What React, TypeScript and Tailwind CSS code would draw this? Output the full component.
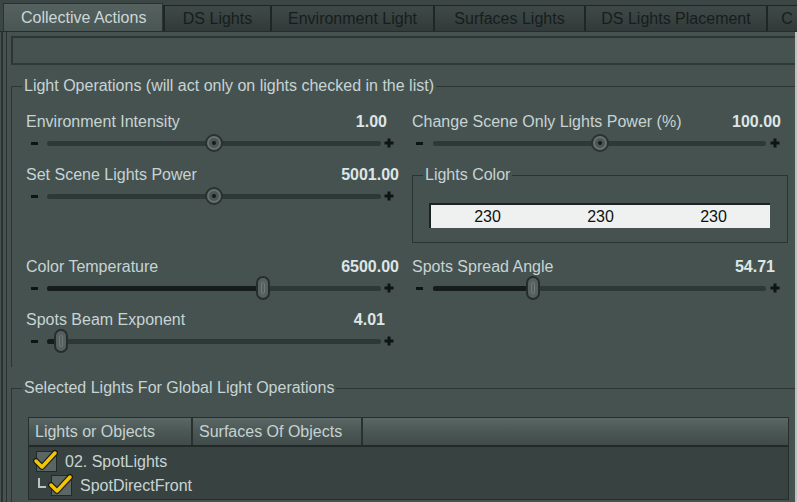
import React from 'react';

type SliderProps = {
  label: string;
  value: string;
  pos: number;
  kind: 'dot' | 'oval';
  valuePad: number;
  right?: boolean;
};

const Minus = () => <span className="block w-[7px] h-[3px] bg-[#0f1413]" />;

const Plus = () => (
  <svg width="10" height="10" viewBox="0 0 10 10" className="block">
    <path d="M5 0.5v9M0.5 5h9" stroke="#0f1413" strokeWidth="3" />
  </svg>
);

const Slider: React.FC<SliderProps> = ({ label, value, pos, kind, valuePad, right }) => {
  const filled = kind === 'oval';
  return (
    <div className="h-[53px]">
      <div className="flex items-center justify-between h-[18px] leading-[18px]" style={{ paddingRight: valuePad }}>
        <span className="text-[#c7d4d4]">{label}</span>
        <span className="font-bold text-[#dde6e6]">{value}</span>
      </div>
      <div className={`mt-[4px] h-[16px] flex items-center ${right ? 'pl-[4px] pr-[8px]' : 'pl-[5px] pr-[5px]'}`}>
        <Minus />
        <div className={`relative flex-1 h-[5px] rounded-full bg-[#2e3836] ${right ? 'ml-[10px] mr-[4px]' : 'ml-[9px] mr-[3px]'}`}>
          {filled && (
            <div className="absolute left-0 top-0 h-full rounded-full bg-[#161c1b]" style={{ width: `${pos * 100}%` }} />
          )}
          {kind === 'dot' ? (
            <div
              className="absolute top-1/2 w-[18px] h-[18px] -ml-[9px] -mt-[9px] rounded-full border-2 border-[#2a3230] bg-[#66706e] flex items-center justify-center"
              style={{ left: `${pos * 100}%` }}
            >
              <div className="w-[10px] h-[10px] rounded-full bg-[#4b5553] flex items-center justify-center">
                <div className="w-[4px] h-[4px] rounded-full bg-[#151b1a]" />
              </div>
            </div>
          ) : (
            <div
              className="absolute top-1/2 w-[14px] h-[24px] -ml-[7px] -mt-[12px] rounded-full border-2 border-[#262e2d] bg-[#56615f] flex items-center justify-center"
              style={{ left: `${pos * 100}%` }}
            >
              <div className="w-[4px] h-[12px] rounded-full border border-[#6f7a78]" />
            </div>
          )}
        </div>
        <Plus />
      </div>
    </div>
  );
};

const Check: React.FC = () => (
  <div className="relative w-[21px] h-[21px] border border-[#222a29] bg-[#5b6563] shrink-0">
    <svg width="26" height="24" viewBox="0 0 26 24" className="absolute -left-[4px] -top-[4px]">
      <path d="M3 13 L9 19 L22 5" fill="none" stroke="#1a1f1e" strokeWidth="6" strokeLinecap="round" strokeLinejoin="round" />
      <path d="M3 13 L9 19 L22 5" fill="none" stroke="#f4c600" strokeWidth="3.5" strokeLinecap="round" strokeLinejoin="round" />
    </svg>
  </div>
);

const tabs = [
  { name: 'DS Lights', w: 'w-[107px]' },
  { name: 'Environment Light', w: 'w-[163px]' },
  { name: 'Surfaces Lights', w: 'w-[151px]' },
  { name: 'DS Lights Placement', w: 'w-[182px]' },
  { name: 'C', w: 'w-[40px]' },
];

export default function App() {
  return (
    <div className="w-[797px] h-[502px] overflow-hidden bg-[#465250] text-[16px] font-['Liberation_Sans',Arial,sans-serif] relative">
      {/* tab strip */}
      <div className="h-[32px] bg-[#3c4745] flex items-end pl-[3px] border-b border-[#262e2d] whitespace-nowrap overflow-hidden">
        <div className="w-[160px] shrink-0 h-[28px] bg-gradient-to-b from-[#55615f] to-[#4a5654] border border-b-0 border-[#2a3332] flex items-center pl-[17px] text-[#cbd7d7]">
          Collective Actions
        </div>
        {tabs.map((t) => (
          <div
            key={t.name}
            className={`${t.w} shrink-0 h-[26px] bg-gradient-to-b from-[#3f4a48] to-[#313a38] border-l-2 border-t border-[#1f2726] flex items-center justify-center text-[#171d1c] overflow-hidden`}
          >
            {t.name}
          </div>
        ))}
      </div>

      <div className="flex h-[470px]">
        <div className="ml-[1px] w-[2px] bg-[#2a3331]" />
        <div className="ml-[3px] w-[1px] bg-[#2a3331]" />
        <div className="flex-1 pl-[4px]">
          {/* recessed bar */}
          <div className="mt-[4px] h-[29px] border-2 border-r-0 border-[#2c3634] border-b-[#2f3937]" />

          {/* group 1 */}
          <div className="relative mt-[21px] border-t border-l border-[#2c3533] h-[281px] pl-[14px] pt-[26px]">
            <span className="absolute -top-[10px] left-[10px] px-[2px] bg-[#465250] text-[#c7d4d4] leading-[18px]">
              Light Operations (will act only on lights checked in the list)
            </span>
            <div className="grid grid-cols-[373px_376px] gap-x-[13px]">
              <div>
                <Slider label="Environment Intensity" value="1.00" pos={0.5} kind="dot" valuePad={12} />
                <div className="h-[92px]">
                  <Slider label="Set Scene Lights Power" value="5001.00" pos={0.5} kind="dot" valuePad={0} />
                </div>
                <Slider label="Color Temperature" value="6500.00" pos={0.648} kind="oval" valuePad={0} />
                <Slider label="Spots Beam Exponent" value="4.01" pos={0.042} kind="oval" valuePad={14} />
              </div>
              <div>
                <Slider label="Change Scene Only Lights Power (%)" value="100.00" pos={0.5} kind="dot" valuePad={7} right />
                <div className="h-[92px] pt-[9px]">
                  <div className="relative h-[68px] border border-[#2b3432] pl-[16px] pt-[27px]">
                    <span className="absolute -top-[10px] left-[10px] px-[2px] bg-[#465250] text-[#c7d4d4] leading-[18px]">
                      Lights Color
                    </span>
                    <div className="w-[341px] h-[25px] bg-[#eef1f0] border-t-2 border-l-2 border-[#1c2221] grid grid-cols-3 text-[#111] leading-[23px]">
                      <span className="text-center">230</span>
                      <span className="text-center">230</span>
                      <span className="text-center">230</span>
                    </div>
                  </div>
                </div>
                <Slider label="Spots Spread Angle" value="54.71" pos={0.3} kind="oval" valuePad={13} right />
              </div>
            </div>
          </div>

          {/* group 2 */}
          <div className="relative mt-[21px] border-t border-l border-[#2c3533] h-[200px] pl-[16px] pt-[28px]">
            <span className="absolute -top-[10px] left-[10px] px-[2px] bg-[#465250] text-[#c7d4d4] leading-[18px]">
              Selected Lights For Global Light Operations
            </span>
            <div className="w-[761px] border border-[#262e2d] bg-[#384240] h-[83px]">
              <div className="h-[29px] flex bg-gradient-to-b from-[#5b6765] via-[#4b5755] to-[#414c4a] border-b-2 border-[#222a29] text-[#c6d2d2] leading-[27px]">
                <div className="w-[164px] pl-[6px] border-r-2 border-[#283130]">Lights or Objects</div>
                <div className="w-[170px] pl-[6px] border-r-2 border-[#283130]">Surfaces Of Objects</div>
                <div className="flex-1" />
              </div>
              <div className="pl-[7px] pt-[3px] text-[#c7d4d4]">
                <div className="flex items-center h-[23px]">
                  <Check />
                  <span className="ml-[8px]">02. SpotLights</span>
                </div>
                <div className="flex items-center h-[25px]">
                  <span className="w-[8px] h-[10px] border-l-2 border-b-2 border-[#b8c4c4] ml-[2px] -mt-[6px]" />
                  <span className="ml-[5px]">
                    <Check />
                  </span>
                  <span className="ml-[8px]">SpotDirectFront</span>
                </div>
              </div>
            </div>
          </div>
        </div>
        <div className="w-[2px] bg-[#b9c2c1]" />
      </div>
    </div>
  );
}
